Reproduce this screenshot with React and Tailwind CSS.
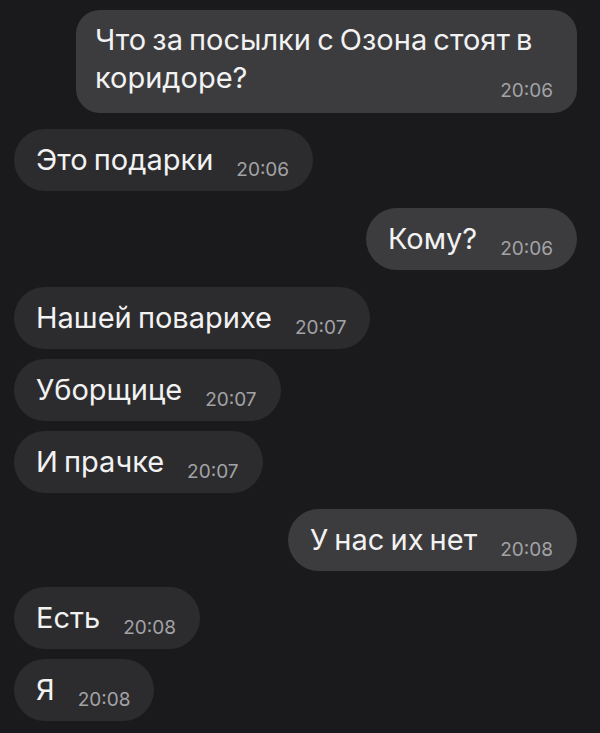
import React from 'react';

const messages = [
    { id: 1, out: true, lines: ['Что за посылки с Озона стоят в', 'коридоре?'], time: '20:06', mt: 'mt-0' },
    { id: 2, out: false, text: 'Это подарки', time: '20:06', mt: 'mt-[16px]' },
    { id: 3, out: true, text: 'Кому?', time: '20:06', mt: 'mt-[17px]' },
    { id: 4, out: false, text: 'Нашей поварихе', time: '20:07', mt: 'mt-[17px]' },
    { id: 5, out: false, text: 'Уборщице', time: '20:07', mt: 'mt-[10px]' },
    { id: 6, out: false, text: 'И прачке', time: '20:07', mt: 'mt-[10px]' },
    { id: 7, out: true, text: 'У нас их нет', time: '20:08', mt: 'mt-[16px]' },
    { id: 8, out: false, text: 'Есть', time: '20:08', mt: 'mt-[16px]' },
    { id: 9, out: false, text: 'Я', time: '20:08', mt: 'mt-[10px]' },
];

const Bubble = ({ m }) => {
    const bg = m.out ? 'bg-[#3c3c3f]' : 'bg-[#2c2c2f]';

    if (m.lines) {
        return (
            <div className={`${bg} w-[501px] rounded-[24px] pl-[19px] pr-[24px] pt-[11px] pb-[16px]`}>
                <div className="text-[29px] leading-[38px] text-[#f2f2f2] whitespace-nowrap [word-spacing:-2px]">{m.lines[0]}</div>
                <div className="flex items-baseline justify-between">
                    <span className="text-[29px] leading-[38px] text-[#f2f2f2]">{m.lines[1]}</span>
                    <span className="text-[19px] leading-[20px] text-[#a3a3a6] relative top-[9px]">{m.time}</span>
                </div>
            </div>
        );
    }

    return (
        <div className={`${bg} h-[62px] rounded-full pl-[22px] pr-[24px] flex items-baseline pt-[16px]`}>
            <span className="text-[29px] leading-[30px] text-[#f2f2f2] whitespace-nowrap [word-spacing:-2px]">{m.text}</span>
            <span className="ml-[23px] text-[19px] leading-[20px] text-[#a3a3a6] relative top-[6px]">{m.time}</span>
        </div>
    );
};

const App = () => {
    return (
        <div className="w-[600px] h-[733px] bg-[#1a1a1c] pt-[10px] pl-[14px] pr-[23px] flex flex-col overflow-hidden"
            style={{ fontFamily: 'Inter, "Noto Sans", sans-serif' }}>
            {messages.map(m => (
                <div key={m.id} className={`${m.mt} flex shrink-0 ${m.out ? 'justify-end' : 'justify-start'}`}>
                    <Bubble m={m} />
                </div>
            ))}
        </div>
    );
};

export default App;
